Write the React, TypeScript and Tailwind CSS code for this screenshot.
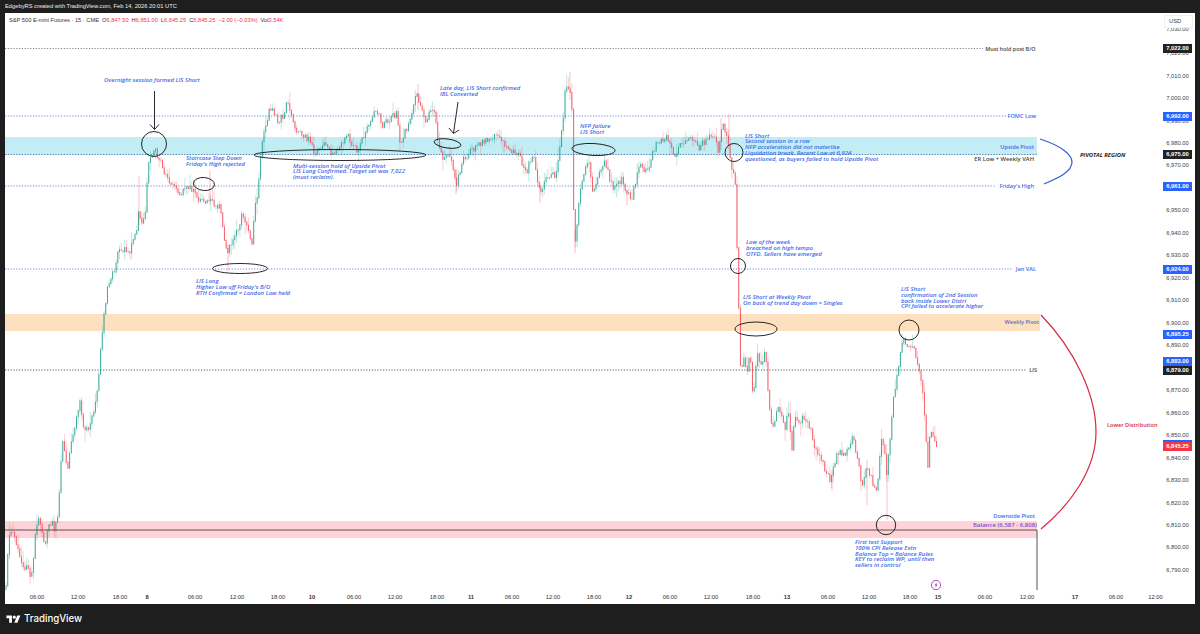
import React from "react";

const PATH: [number, number][] = [
  [6, 589], [7, 561], [10, 531], [13, 531], [20, 557], [22, 567], [27, 567], [30, 576], [33, 564], [35, 534],
  [38, 519], [42, 531], [45, 544], [48, 527], [52, 519], [55, 531], [58, 511], [60, 481], [62, 441], [65, 454],
  [68, 466], [72, 437], [75, 424], [80, 398], [84, 430], [90, 428], [96, 400], [99, 372], [102, 333], [107, 290],
  [115, 267], [118, 250], [130, 250], [137, 230], [138, 212], [143, 223], [146, 205], [148, 160], [155, 150], [160, 160],
  [167, 180], [173, 183], [180, 193], [187, 187], [193, 190], [200, 200], [210, 200], [220, 207], [225, 243], [228, 250],
  [233, 238], [237, 230], [243, 213], [252, 243], [255, 205], [258, 190], [260, 160], [263, 137], [270, 105], [277, 120],
  [283, 117], [287, 100], [295, 127], [300, 133], [310, 140], [315, 153], [325, 143], [333, 155], [347, 135], [357, 150],
  [367, 130], [375, 107], [383, 125], [397, 113], [400, 143], [410, 120], [417, 93], [422, 110], [427, 123], [430, 108],
  [435, 110], [438, 140], [442, 157], [450, 153], [457, 183], [463, 157], [477, 147], [487, 140], [497, 132], [507, 147],
  [517, 153], [527, 170], [533, 153], [540, 193], [547, 177], [557, 173], [563, 120], [565, 88], [570, 90], [572, 110],
  [573, 193], [575, 242], [580, 193], [585, 173], [588, 157], [593, 193], [600, 170], [605, 160], [613, 190], [622, 180],
  [627, 195], [632, 197], [640, 163], [647, 173], [657, 140], [667, 138], [675, 157], [680, 140], [687, 143], [693, 137],
  [700, 148], [707, 137], [717, 140], [718, 153], [722, 123], [728, 137], [731, 170], [735, 170], [736, 227], [738, 267],
  [739, 320], [741, 380], [743, 353], [747, 377], [750, 347], [753, 397], [757, 355], [762, 368], [765, 347], [768, 387],
  [772, 433], [778, 403], [785, 427], [788, 407], [792, 447], [795, 417], [800, 425], [802, 412], [810, 427], [813, 441],
  [823, 464], [830, 480], [837, 454], [847, 451], [853, 434], [862, 484], [867, 467], [877, 494], [882, 431], [887, 474],
  [893, 403], [897, 377], [903, 337], [908, 347], [913, 347], [918, 363], [922, 387], [925, 420], [927, 457], [928, 467],
  [930, 431], [937, 446],
];

const WICKS: [number, number, number][] = [
  [139, 176, 225], [210, 170, 205], [228, 245, 271], [418, 84, 110], [570, 72, 100], [575, 230, 253], [729, 114, 140],
  [721, 118, 150], [887, 470, 520], [832, 470, 491], [867, 460, 505], [456, 170, 194], [540, 185, 203], [627, 190, 205],
];

function priceAt(x: number) {
  for (let i = 1; i < PATH.length; i++) {
    const [x1, y1] = PATH[i];
    if (x <= x1) {
      const [x0, y0] = PATH[i - 1];
      return y0 + ((y1 - y0) * (x - x0)) / (x1 - x0 || 1);
    }
  }
  return PATH[PATH.length - 1][1];
}

function buildCandles() {
  let seed = 71;
  const rnd = () => {
    seed = (seed * 16807) % 2147483647;
    return seed / 2147483647;
  };
  const out: { x: number; o: number; c: number; h: number; l: number }[] = [];
  let prev = PATH[0][1];
  for (let x = 6; x <= 937; x += 1.72) {
    const c = priceAt(x) + (rnd() - 0.5) * 7;
    const h = Math.min(prev, c) - rnd() * rnd() * 14;
    const l = Math.max(prev, c) + rnd() * rnd() * 14;
    out.push({ x, o: prev, c, h, l });
    prev = c;
  }
  return out;
}

const candles = buildCandles();

const NOTES = [
  { cls: "left-[99px] top-[65px]", text: "Overnight session formed LIS Short" },
  { cls: "left-[181px] top-[143px]", text: "Staircase Step Down\nFriday's High rejected" },
  { cls: "left-[288px] top-[150.5px]", text: "Multi-session hold of Upside Pivot\nLIS Long Confirmed. Target set was 7,022\n(must reclaim)." },
  { cls: "left-[435px] top-[73px]", text: "Late day, LIS Short confirmed\nIBL Converted" },
  { cls: "left-[575px] top-[111px]", text: "NFP failure\nLIS Short" },
  { cls: "left-[740px] top-[120.5px]", text: "LIS Short\nSecond session in a row\nNFP acceleration did not materlise\nLiquidation break. Recent Low at 6,924\nquestioned, as buyers failed to hold Upside Pivot" },
  { cls: "left-[741px] top-[227px]", text: "Low of the week\nbreached on high tempo\nOTFD. Sellers have emerged" },
  { cls: "left-[191px] top-[266px]", text: "LIS Long\nHigher Low off Friday's B/O\nRTH Confirmed = London Low held" },
  { cls: "left-[738px] top-[282px]", text: "LIS Short at Weekly Pivot\nOn back of trend day down = Singles" },
  { cls: "left-[896px] top-[274px]", text: "LIS Short\nconfirmation of 2nd Session\nback inside Lower Distri\nCPI failed to accelerate higher" },
  { cls: "left-[850px] top-[527px]", text: "First test Support\n100% CPI Release Extn\nBalance Top = Balance Rules\nKEY to reclaim WP, until then\nsellers in control" },
];

const LABELS = [
  { cls: "right-[127.5px] top-[32.5px] text-[5.4px] text-[#444444]", text: "Must hold post B/O" },
  { cls: "right-[127px] top-[100px] text-[5.6px] text-[#3f6bea]", text: "FOMC Low" },
  { cls: "right-[129px] top-[130.5px] text-[5.6px] text-[#3f6bea]", text: "Upside Pivot" },
  { cls: "right-[129px] top-[143px] text-[5.8px] text-[#444444]", text: "ER Low + Weekly VAH" },
  { cls: "right-[129px] top-[170px] text-[5.6px] text-[#3f6bea]", text: "Friday's High" },
  { cls: "right-[127px] top-[253px] text-[5.6px] text-[#3f6bea]", text: "Jan VAL" },
  { cls: "right-[124px] top-[306px] text-[5.6px] text-[#5f6fc0]", text: "Weekly Pivot" },
  { cls: "right-[126px] top-[354px] text-[5.6px] text-[#444444]", text: "LIS" },
  { cls: "right-[128px] top-[500px] text-[5.6px] text-[#3f6bea]", text: "Downside Pivot" },
  { cls: "right-[126px] top-[509px] text-[6px] text-[#7a4fd0]", text: "Balance (6,587 - 6,808)" },
];

const PRICES = [
  { cls: "top-[12px]", text: "7,030.00" },
  { cls: "top-[36px]", text: "7,020.00" },
  { cls: "top-[58.5px]", text: "7,010.00" },
  { cls: "top-[81px]", text: "7,000.00" },
  { cls: "top-[103.5px]", text: "6,990.00" },
  { cls: "top-[126px]", text: "6,980.00" },
  { cls: "top-[148px]", text: "6,970.00" },
  { cls: "top-[193px]", text: "6,950.00" },
  { cls: "top-[216px]", text: "6,940.00" },
  { cls: "top-[238px]", text: "6,930.00" },
  { cls: "top-[260.5px]", text: "6,920.00" },
  { cls: "top-[283px]", text: "6,910.00" },
  { cls: "top-[305.5px]", text: "6,900.00" },
  { cls: "top-[328px]", text: "6,890.00" },
  { cls: "top-[373px]", text: "6,870.00" },
  { cls: "top-[396px]", text: "6,860.00" },
  { cls: "top-[418px]", text: "6,850.00" },
  { cls: "top-[441px]", text: "6,840.00" },
  { cls: "top-[463px]", text: "6,830.00" },
  { cls: "top-[485.5px]", text: "6,820.00" },
  { cls: "top-[508px]", text: "6,810.00" },
  { cls: "top-[530px]", text: "6,800.00" },
  { cls: "top-[553px]", text: "6,790.00" },
];

const TAGS = [
  { cls: "top-[31px] bg-[#232323]", text: "7,022.00" },
  { cls: "top-[98.5px] bg-[#2962ff]", text: "6,992.00" },
  { cls: "top-[136.5px] bg-[#232323]", text: "6,975.00" },
  { cls: "top-[168.5px] bg-[#2962ff]", text: "6,961.00" },
  { cls: "top-[251.5px] bg-[#2962ff]", text: "6,924.00" },
  { cls: "top-[316.5px] bg-[#2962ff]", text: "6,895.25" },
  { cls: "top-[343.5px] bg-[#2962ff]", text: "6,883.00" },
  { cls: "top-[352.5px] bg-[#232323]", text: "6,879.00" },
  { cls: "top-[428.5px] bg-[#f23645]", text: "6,845.25" },
];

const TIMES = [
  { cls: "left-[32px]", text: "06:00" }, { cls: "left-[73px]", text: "12:00" }, { cls: "left-[115px]", text: "18:00" },
  { cls: "left-[142px]", text: "8" }, { cls: "left-[190px]", text: "06:00" }, { cls: "left-[232px]", text: "12:00" },
  { cls: "left-[273px]", text: "18:00" }, { cls: "left-[307px]", text: "10" }, { cls: "left-[349px]", text: "06:00" },
  { cls: "left-[390px]", text: "12:00" }, { cls: "left-[432px]", text: "18:00" }, { cls: "left-[466px]", text: "11" },
  { cls: "left-[507px]", text: "06:00" }, { cls: "left-[548px]", text: "12:00" }, { cls: "left-[589px]", text: "18:00" },
  { cls: "left-[624px]", text: "12" }, { cls: "left-[665px]", text: "06:00" }, { cls: "left-[706px]", text: "12:00" },
  { cls: "left-[748px]", text: "18:00" }, { cls: "left-[782px]", text: "13" }, { cls: "left-[823px]", text: "06:00" },
  { cls: "left-[864px]", text: "12:00" }, { cls: "left-[905px]", text: "18:00" }, { cls: "left-[933px]", text: "15" },
  { cls: "left-[980px]", text: "06:00" }, { cls: "left-[1022px]", text: "12:00" }, { cls: "left-[1070px]", text: "17" },
  { cls: "left-[1111px]", text: "06:00" }, { cls: "left-[1150.5px]", text: "12:00" },
];

const Quote = ({ k, v }: { k: string; v: string }) => (
  <span>
    {k}
    <span className="text-[#f23645]">{v}</span>
  </span>
);

function ChartDrawing() {
  return (
    <svg className="absolute inset-0" width={1158} height={578} viewBox="5 13 1158 578">
      <rect x={5} y={137} width={1032} height={18} fill="#c3edf5" />
      <rect x={5} y={314} width={1035} height={17} fill="#fde0bf" />
      <rect x={5} y={521} width={1032} height={17} fill="#ffd3d8" />

      <g strokeWidth={0.8} strokeDasharray="1.2 1.6" fill="none">
        <path d="M5 48.5H983" stroke="#666666" />
        <path d="M5 116H1006" stroke="#4a6fd8" />
        <path d="M5 154.5H1037" stroke="#3b5a9a" />
        <path d="M5 186H995" stroke="#4a6fd8" />
        <path d="M5 269H1012" stroke="#4a6fd8" />
        <path d="M5 370H1027" stroke="#333333" />
      </g>

      {candles.map((b, i) => {
        const small = Math.abs(b.c - b.o) < 1.2;
        const color = b.c <= b.o ? "#089981" : "#f23645";
        return (
          <g key={i}>
            <path d={`M${b.x} ${b.h}V${b.l}`} stroke={color} strokeWidth={0.9} opacity={0.25} />
            <path
              d={`M${b.x} ${Math.min(b.o, b.c)}V${Math.max(b.o, b.c) + 0.8}`}
              stroke={small ? "#777777" : color}
              strokeWidth={1}
              opacity={small ? 0.6 : 0.72}
            />
          </g>
        );
      })}
      {WICKS.map(([x, y1, y2], i) => (
        <path key={i} d={`M${x} ${y1}V${y2}`} stroke="#f23645" strokeWidth={0.9} opacity={0.35} />
      ))}

      <path d="M5 530H1037V590" fill="none" stroke="#555555" strokeWidth={1} />

      <g fill="none" stroke="#111111" strokeWidth={0.9}>
        <circle cx={154} cy={144} r={12.5} />
        <ellipse cx={204} cy={184} rx={10.5} ry={6.5} transform="rotate(5 204 184)" />
        <ellipse cx={340} cy={155} rx={86} ry={5.5} />
        <ellipse cx={240} cy={268.5} rx={27.5} ry={5} />
        <ellipse cx={447.5} cy={143.5} rx={13.5} ry={4.5} transform="rotate(8 447.5 143.5)" />
        <ellipse cx={593.5} cy={149.5} rx={21.5} ry={6} transform="rotate(3 593.5 149.5)" />
        <circle cx={734} cy={152.5} r={9} />
        <circle cx={738} cy={266} r={7.5} />
        <ellipse cx={756} cy={329} rx={21} ry={7} />
        <circle cx={909} cy={330} r={10} />
        <circle cx={886} cy={525} r={9.7} />
        <path d="M154.5 91V129M150 124.5L154.5 129.5L159 124.5" />
        <path d="M458 102L453.5 133M449 128L453.5 133.5L459 130" />
      </g>

      <path d="M1040 139C1062 146 1072 155 1072 162C1072 172 1058 178 1044 184" fill="none" stroke="#2f5fd0" strokeWidth={1.2} />
      <path d="M1041 315C1075 350 1096 395 1096 432C1096 470 1070 505 1041 529" fill="none" stroke="#d6293e" strokeWidth={1.2} />

      <circle cx={936} cy={585} r={4.6} fill="#ffffff" stroke="#9c27b0" strokeWidth={0.8} />
      <path d="M937 582L934.6 585.4H936.2L935.2 588L937.6 584.6H936Z" fill="#9c27b0" />
    </svg>
  );
}

export default function App() {
  return (
    <div className="w-[1200px] h-[634px] bg-[#1e1e1e] flex flex-col overflow-hidden font-['Open_Sans',sans-serif]">
      <div className="h-[13px] px-[5px] flex items-center text-[5.75px] text-[#eeeeee] font-['Liberation_Sans',sans-serif]">
        EdgebyRS created with TradingView.com, Feb 14, 2026 20:01 UTC
      </div>

      <div className="mx-[5px] h-[591px] bg-white flex flex-col">
        <div className="h-[578px] flex">
          <div className="relative w-[1158px] overflow-hidden">
            <ChartDrawing />

            <div className="absolute left-[4px] top-[4px] flex gap-[3px] text-[5.7px] leading-[7px] text-[#333333] whitespace-nowrap font-['Liberation_Sans',sans-serif]">
              <span>S&amp;P 500 E-mini Futures · 15 · CME</span>
              <Quote k="O" v="6,847.50" />
              <Quote k="H" v="6,851.00" />
              <Quote k="L" v="6,845.25" />
              <Quote k="C" v="6,845.25" />
              <span className="text-[#f23645]">−2.00 (−0.03%)</span>
              <Quote k="Vol" v="3.54K" />
            </div>

            {NOTES.map(n => (
              <div key={n.text} className={`absolute ${n.cls} text-[6px] leading-[5.8px] italic font-semibold text-[#3f6bea] whitespace-pre`}>
                {n.text}
              </div>
            ))}
            {LABELS.map(l => (
              <div key={l.text} className={`absolute ${l.cls} leading-[6px] font-semibold whitespace-nowrap`}>
                {l.text}
              </div>
            ))}
            <div className="absolute left-[1075px] top-[139px] text-[5.8px] leading-[6px] italic font-bold text-[#222222] whitespace-nowrap">
              PIVOTAL REGION
            </div>
            <div className="absolute left-[1102px] top-[409px] text-[5.6px] leading-[6px] font-semibold text-[#d6293e] whitespace-nowrap">
              Lower Distribution
            </div>
          </div>

          <div className="relative w-[32px] text-[5.8px] font-['Liberation_Sans',sans-serif]">
            {PRICES.map(p => (
              <div key={p.text} className={`absolute left-0 w-[29px] h-[8px] leading-[8px] text-center text-[#444444] ${p.cls}`}>
                {p.text}
              </div>
            ))}
            <div className="absolute left-[1px] top-[2px] w-[29px] h-[13px] bg-white border border-[#f0f0f0] rounded-[1px] pl-[4px] leading-[11px] text-[#444444]">
              USD
            </div>
            <div className="absolute left-0 top-[426.5px] w-[29px] h-[2px] bg-[#2962ff]" />
            {TAGS.map(t => (
              <div key={t.text} className={`absolute left-0 w-[29px] h-[9px] leading-[9px] text-center text-white font-semibold ${t.cls}`}>
                {t.text}
              </div>
            ))}
          </div>
        </div>

        <div className="relative h-[13px] overflow-hidden text-[5.8px] leading-[13px] text-[#333333] w-[1158px] font-['Liberation_Sans',sans-serif]">
          {TIMES.map((t, i) => (
            <span key={i} className={`absolute top-0 -translate-x-1/2 ${t.cls} ${t.text.length < 3 ? "font-bold" : ""}`}>
              {t.text}
            </span>
          ))}
        </div>
      </div>

      <div className="flex-1 flex items-center gap-[3px] px-[6px]">
        <svg width={15} height={11} viewBox="0 0 36 28" fill="#ffffff">
          <path d="M14 22H7V11H0V4h14v18zM28 22h-8l7.5-18h8L28 22z" />
          <circle cx={20} cy={8} r={4} />
        </svg>
        <span className="text-[9.7px] font-medium text-white font-['Inter',sans-serif]">TradingView</span>
      </div>
    </div>
  );
}
